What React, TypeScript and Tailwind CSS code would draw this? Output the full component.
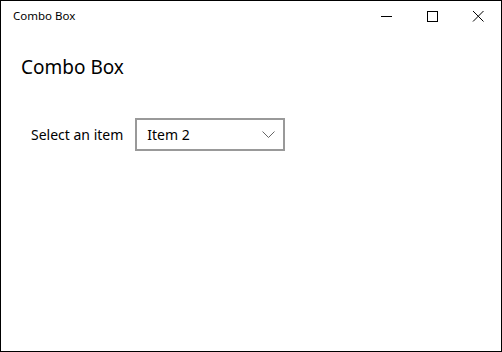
export default function App() {
  return (
    <div
      className="w-[502px] h-[352px] border border-black bg-white flex flex-col text-black"
      style={{ fontFamily: '"Noto Sans", "Open Sans", sans-serif' }}
    >
      {/* title bar */}
      <div className="h-[30px] flex items-center justify-between">
        <span className="pl-[12px] text-[11.5px]">Combo Box</span>
        <div className="flex h-full">
          <button className="w-[46px] h-full flex items-center justify-center">
            <svg width="12" height="12" viewBox="0 0 12 12">
              <path d="M1 6.5h11" stroke="black" strokeWidth="1" />
            </svg>
          </button>
          <button className="w-[46px] h-full flex items-center justify-center">
            <svg width="12" height="12" viewBox="0 0 12 12">
              <rect x="1.5" y="1.5" width="10" height="10" fill="none" stroke="black" strokeWidth="1" />
            </svg>
          </button>
          <button className="w-[46px] h-full flex items-center justify-center">
            <svg width="12" height="12" viewBox="0 0 12 12">
              <path d="M1 1l10.5 10.5M11.5 1L1 11.5" stroke="black" strokeWidth="1" />
            </svg>
          </button>
        </div>
      </div>

      {/* content */}
      <div className="flex flex-col pl-[20px] pt-[23px]">
        <h1 className="text-[19px] leading-[26px]">Combo Box</h1>
        <div className="flex items-center mt-[38px] pl-[10px] gap-[12px]">
          <span className="text-[14px]">Select an item</span>
          <div className="w-[150px] h-[33px] border-2 border-[#999999] flex items-center justify-between pl-[10px] pr-[8px]">
            <span className="text-[14px]">Item 2</span>
            <svg width="13" height="7" viewBox="0 0 13 7">
              <path d="M0.5 0.5l6 6 6-6" fill="none" stroke="#555" strokeWidth="0.9" />
            </svg>
          </div>
        </div>
      </div>
    </div>
  );
}
